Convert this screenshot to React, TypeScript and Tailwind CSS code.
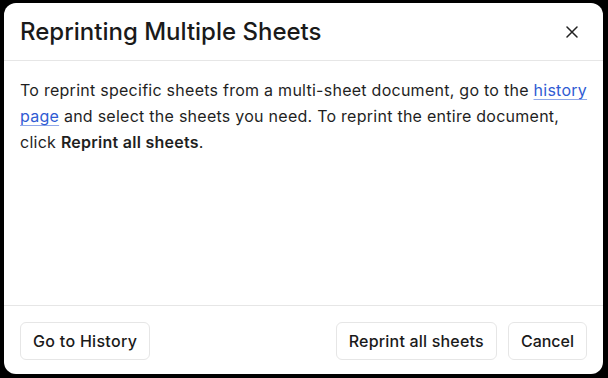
import React from "react";

export default function App() {
  return (
    <div className="w-[608px] h-[378px] bg-black pt-[3px] pl-[4px]" style={{ fontFamily: "Inter, 'Noto Sans', sans-serif" }}>
      <div className="w-[599px] h-[371px] bg-white rounded-[12px] flex flex-col overflow-hidden">
        <div className="h-[58px] shrink-0 px-4 flex items-center justify-between border-b border-[#e6e6e6]">
          <h1 className="text-[24px] font-medium text-[#1a1a1a] tracking-[0px]">Reprinting Multiple Sheets</h1>
          <button className="w-6 h-6 flex items-center justify-center mr-[3px] text-[#222]">
            <svg width="12" height="12" viewBox="0 0 12 12" fill="none" stroke="currentColor" strokeWidth="1.5" strokeLinecap="round">
              <path d="M1 1L11 11M11 1L1 11" />
            </svg>
          </button>
        </div>
        <div className="flex-1 pl-4 pr-[8px] pt-[16px] text-[16px] leading-[26px] text-[#1f1f1f] tracking-[0.26px]">
          To reprint specific sheets from a multi-sheet document, go to the{" "}
          <a className="text-[#2f5bd3] underline decoration-[#8fa8ea] underline-offset-[3px]">history page</a> and select the
          sheets you need. To reprint the entire document, click <span className="font-semibold">Reprint all sheets</span>.
        </div>
        <div className="h-[69px] shrink-0 border-t border-[#e6e6e6] px-4 pt-[16px] flex items-start justify-between">
          <button className="h-[38px] px-3 border border-[#e6e6e6] rounded-[6px] text-[16px] font-medium text-[#1a1a1a] tracking-[0.3px]">Go to History</button>
          <div className="flex gap-[11px]">
            <button className="h-[38px] px-3 border border-[#e6e6e6] rounded-[6px] text-[16px] font-medium text-[#1a1a1a] tracking-[0.2px]">Reprint all sheets</button>
            <button className="h-[38px] px-3 border border-[#e6e6e6] rounded-[6px] text-[16px] font-medium text-[#1a1a1a]">Cancel</button>
          </div>
        </div>
      </div>
    </div>
  );
}
